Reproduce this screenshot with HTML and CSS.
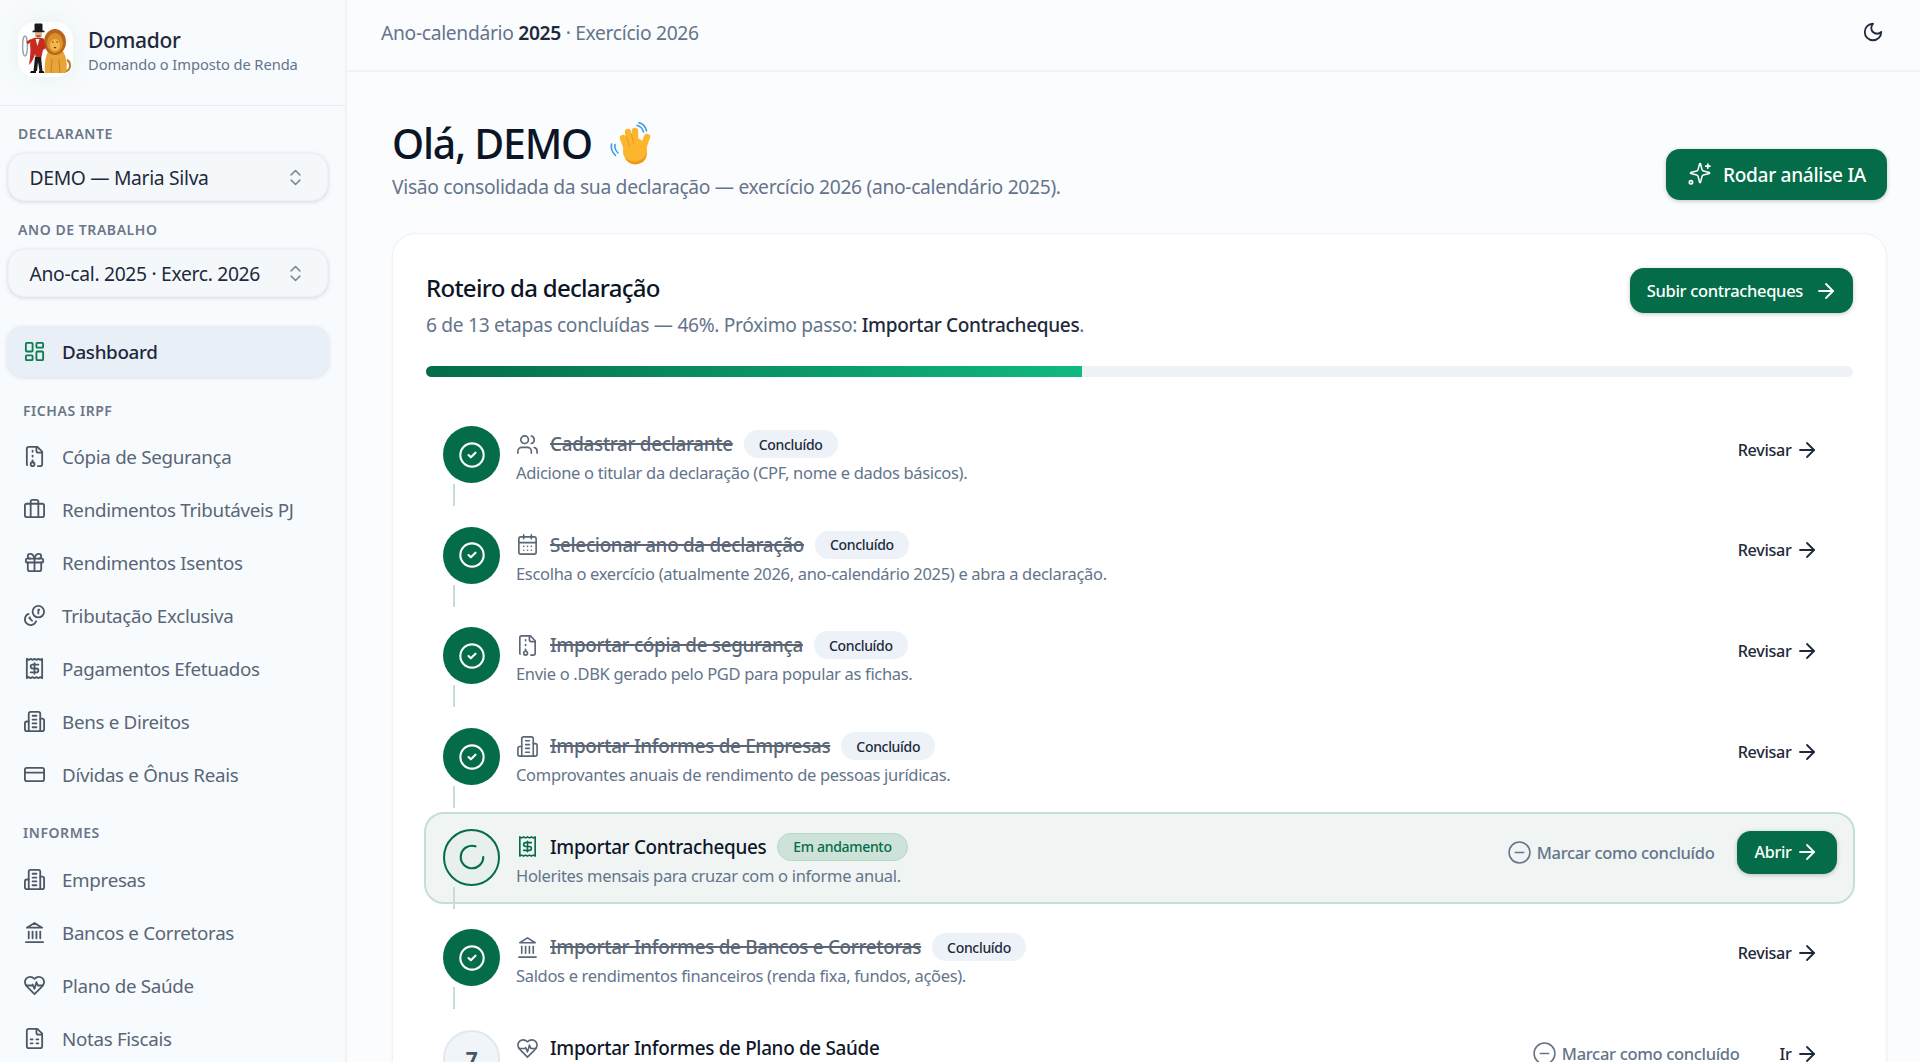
FILE: index.html
```html
<!DOCTYPE html>
<html lang="pt-BR">
<head>
<meta charset="utf-8">
<title>Domador</title>
<link rel="stylesheet" href="styles.css">
</head>
<body>
<svg class="sprite" aria-hidden="true">
  <defs>
    <symbol id="i-arrow" viewBox="0 0 24 24"><path d="M5 12h14"/><path d="m12 5 7 7-7 7"/></symbol>
    <symbol id="i-moon" viewBox="0 0 24 24"><path d="M12 3a6 6 0 0 0 9 9 9 9 0 1 1-9-9Z"/></symbol>
    <symbol id="i-updown" viewBox="0 0 24 24"><path d="m7 15 5 5 5-5"/><path d="m7 9 5-5 5 5"/></symbol>
    <symbol id="i-dash" viewBox="0 0 24 24"><rect x="3" y="3" width="7" height="9" rx="1"/><rect x="14" y="3" width="7" height="5" rx="1"/><rect x="14" y="12" width="7" height="9" rx="1"/><rect x="3" y="16" width="7" height="5" rx="1"/></symbol>
    <symbol id="i-archive" viewBox="0 0 24 24"><path d="M10 12v-1"/><path d="M10 18v-2"/><path d="M10 7V6"/><path d="M14 2v4a2 2 0 0 0 2 2h4"/><path d="M15.5 22H18a2 2 0 0 0 2-2V7l-5-5H6a2 2 0 0 0-2 2v16a2 2 0 0 0 .274 1.01"/><circle cx="10" cy="20" r="2"/></symbol>
    <symbol id="i-brief" viewBox="0 0 24 24"><path d="M16 20V4a2 2 0 0 0-2-2h-4a2 2 0 0 0-2 2v16"/><rect x="2" y="6" width="20" height="14" rx="2"/></symbol>
    <symbol id="i-gift" viewBox="0 0 24 24"><rect x="3" y="8" width="18" height="4" rx="1"/><path d="M12 8v13"/><path d="M19 12v7a2 2 0 0 1-2 2H7a2 2 0 0 1-2-2v-7"/><path d="M7.5 8a2.5 2.5 0 0 1 0-5A4.8 8 0 0 1 12 8a4.8 8 0 0 1 4.5-5 2.5 2.5 0 0 1 0 5"/></symbol>
    <symbol id="i-coins" viewBox="0 0 24 24"><g transform="matrix(-1 0 0 1 24 0)"><circle cx="8" cy="8" r="6"/><path d="M18.09 10.37A6 6 0 1 1 10.34 18"/><path d="M7 6h1v4"/><path d="m16.71 13.88.7.71-2.82 2.82"/></g></symbol>
    <symbol id="i-receipt" viewBox="0 0 24 24"><path d="M4 2v20l2-1 2 1 2-1 2 1 2-1 2 1 2-1 2 1V2l-2 1-2-1-2 1-2-1-2 1-2-1-2 1Z"/><path d="M16 8h-6a2 2 0 1 0 0 4h4a2 2 0 1 1 0 4H8"/><path d="M12 17.5v-11"/></symbol>
    <symbol id="i-building" viewBox="0 0 24 24"><path d="M6 22V4a2 2 0 0 1 2-2h8a2 2 0 0 1 2 2v18Z"/><path d="M6 12H4a2 2 0 0 0-2 2v6a2 2 0 0 0 2 2h2"/><path d="M18 9h2a2 2 0 0 1 2 2v9a2 2 0 0 1-2 2h-2"/><path d="M10 6h4"/><path d="M10 10h4"/><path d="M10 14h4"/><path d="M10 18h4"/></symbol>
    <symbol id="i-card" viewBox="0 0 24 24"><rect x="2" y="5" width="20" height="14" rx="2"/><path d="M2 10h20"/></symbol>
    <symbol id="i-bank" viewBox="0 0 24 24"><path d="M3 22h18"/><path d="M6 18v-7"/><path d="M10 18v-7"/><path d="M14 18v-7"/><path d="M18 18v-7"/><path d="M12 2l8 5H4Z"/></symbol>
    <symbol id="i-heart" viewBox="0 0 24 24"><path d="M19 14c1.49-1.46 3-3.21 3-5.5A5.5 5.5 0 0 0 16.5 3c-1.76 0-3 .5-4.5 2-1.5-1.5-2.74-2-4.5-2A5.5 5.5 0 0 0 2 8.5c0 2.3 1.5 4.05 3 5.5l7 7Z"/><path d="M3.22 12H9.5l.5-1 2 4.5 2-7 1.5 3.5h5.27"/></symbol>
    <symbol id="i-sheet" viewBox="0 0 24 24"><path d="M15 2H6a2 2 0 0 0-2 2v16a2 2 0 0 0 2 2h12a2 2 0 0 0 2-2V7Z"/><path d="M14 2v4a2 2 0 0 0 2 2h4"/><path d="M8 13h2"/><path d="M14 13h2"/><path d="M8 17h2"/><path d="M14 17h2"/></symbol>
    <symbol id="i-users" viewBox="0 0 24 24"><path d="M16 21v-2a4 4 0 0 0-4-4H6a4 4 0 0 0-4 4v2"/><circle cx="9" cy="7" r="4"/><path d="M22 21v-2a4 4 0 0 0-3-3.87"/><path d="M16 3.13a4 4 0 0 1 0 7.75"/></symbol>
    <symbol id="i-cal" viewBox="0 0 24 24"><path d="M8 2v4"/><path d="M16 2v4"/><rect x="3" y="4" width="18" height="18" rx="2"/><path d="M3 10h18"/><path d="M8 14h.01"/><path d="M12 14h.01"/><path d="M16 14h.01"/><path d="M8 18h.01"/><path d="M12 18h.01"/><path d="M16 18h.01"/></symbol>
    <symbol id="i-spark" viewBox="0 0 24 24"><path d="M9.937 15.5A2 2 0 0 0 8.5 14.063l-6.135-1.582a.5.5 0 0 1 0-.962L8.5 9.936A2 2 0 0 0 9.937 8.5l1.582-6.135a.5.5 0 0 1 .963 0L14.063 8.5A2 2 0 0 0 15.5 9.937l6.135 1.581a.5.5 0 0 1 0 .964L15.5 14.063a2 2 0 0 0-1.437 1.437l-1.582 6.135a.5.5 0 0 1-.963 0z" transform="translate(1.5 -0.5) scale(.92)"/><path d="M20 2v4"/><path d="M22 4h-4"/><circle cx="3.8" cy="19.5" r="1.6"/></symbol>
    <symbol id="i-minus" viewBox="0 0 24 24"><circle cx="12" cy="12" r="10"/><path d="M8 12h8"/></symbol>
    <symbol id="i-check" viewBox="0 0 24 24"><circle cx="12" cy="12" r="10"/><path d="m9 12 2 2 4-4"/></symbol>
    <symbol id="i-loader" viewBox="0 0 24 24"><path d="M21 12a9 9 0 1 1-6.219-8.56"/></symbol>
  </defs>
</svg>

<div class="shell">
  <aside class="sidebar">
    <div class="brand">
      <div class="logo">
        <svg viewBox="0 0 55 55" width="55" height="55">
          <path d="M44 49c5 1 8-1 8-5 0-3-1-5-3-6" fill="none" stroke="#b97a22" stroke-width="2"/>
          <path d="M27 51c-1-10 1-19 4-23h13c4 5 6 15 4 23Z" fill="#e8a436"/>
          <path d="M33 51l1-14M42 51l-1-14" stroke="#c77f1f" stroke-width="1"/>
          <ellipse cx="37" cy="20" rx="11" ry="13" fill="#b5651d"/>
          <ellipse cx="37" cy="21" rx="8" ry="10" fill="#dd9029"/>
          <ellipse cx="37" cy="23" rx="5" ry="6" fill="#f2b84f"/>
          <path d="M34 20h1.500M38.500 20h1.500" stroke="#4a2b10" stroke-width="1.200"/>
          <path d="M35.500 25h3l-1.500 1.800Z" fill="#5a3010"/>
          <ellipse cx="7" cy="24" rx="2.400" ry="10" fill="none" stroke="#9aa3ad" stroke-width="1.400"/>
          <path d="M9 21l5-3" stroke="#c92a20" stroke-width="3"/>
          <path d="M14 17c3-2 9-2 12 0l2 9-3 2-2 9h-5l-1-5c-1 4-3 8-6 11 1-7 2-14 1-21Z" fill="#c92a20"/>
          <path d="M17.500 17h4l-2 7Z" fill="#f2efe8"/>
          <path d="M17 35h6l1.500 14h-3l-1.500-9-1 9h-3.500Z" fill="#1d1a1c"/>
          <path d="M13 49h5v2h-6ZM21 49h4.500l1 2H21Z" fill="#111"/>
          <circle cx="20.500" cy="12.500" r="3.600" fill="#e7b086"/>
          <rect x="16.500" y="1.500" width="8" height="8" rx="1" fill="#1b1b1f"/>
          <rect x="14.500" y="8.500" width="12" height="1.800" rx=".9" fill="#1b1b1f"/>
          <path d="M18.500 14h4" stroke="#3a2418" stroke-width="1"/>
        </svg>
      </div>
      <div class="brand-text">
        <div class="brand-name">Domador</div>
        <div class="brand-sub">Domando o Imposto de Renda</div>
      </div>
    </div>

    <div class="field-label first">DECLARANTE</div>
    <div class="select">
      <span>DEMO — Maria Silva</span>
      <svg class="ico updown"><use href="#i-updown"/></svg>
    </div>
    <div class="field-label second">ANO DE TRABALHO</div>
    <div class="select">
      <span>Ano-cal. 2025 · Exerc. 2026</span>
      <svg class="ico updown"><use href="#i-updown"/></svg>
    </div>

    <nav class="nav">
      <a class="nav-item active"><svg class="ico nav-ico"><use href="#i-dash"/></svg><span>Dashboard</span></a>
      <div class="nav-group g-one">FICHAS IRPF</div>
      <a class="nav-item"><svg class="ico nav-ico"><use href="#i-archive"/></svg><span>Cópia de Segurança</span></a>
      <a class="nav-item"><svg class="ico nav-ico"><use href="#i-brief"/></svg><span>Rendimentos Tributáveis PJ</span></a>
      <a class="nav-item"><svg class="ico nav-ico"><use href="#i-gift"/></svg><span>Rendimentos Isentos</span></a>
      <a class="nav-item"><svg class="ico nav-ico"><use href="#i-coins"/></svg><span>Tributação Exclusiva</span></a>
      <a class="nav-item"><svg class="ico nav-ico"><use href="#i-receipt"/></svg><span>Pagamentos Efetuados</span></a>
      <a class="nav-item"><svg class="ico nav-ico"><use href="#i-building"/></svg><span>Bens e Direitos</span></a>
      <a class="nav-item"><svg class="ico nav-ico"><use href="#i-card"/></svg><span>Dívidas e Ônus Reais</span></a>
      <div class="nav-group g-two">INFORMES</div>
      <a class="nav-item"><svg class="ico nav-ico"><use href="#i-building"/></svg><span>Empresas</span></a>
      <a class="nav-item"><svg class="ico nav-ico"><use href="#i-bank"/></svg><span>Bancos e Corretoras</span></a>
      <a class="nav-item"><svg class="ico nav-ico"><use href="#i-heart"/></svg><span>Plano de Saúde</span></a>
      <a class="nav-item"><svg class="ico nav-ico"><use href="#i-sheet"/></svg><span>Notas Fiscais</span></a>
    </nav>
  </aside>

  <main class="main">
    <header class="topbar">
      <div class="crumb">Ano-calendário <strong>2025</strong> · Exercício 2026</div>
      <svg class="ico moon"><use href="#i-moon"/></svg>
    </header>

    <div class="content">
      <div class="page-head">
        <div>
          <h1 class="hello">Olá, DEMO
            <svg class="wave" viewBox="0 0 44 44" width="44" height="44">
              <g fill="none" stroke="#3f9fe0" stroke-width="1.600" stroke-linecap="round">
                <path d="M29 3.500c3 .5 5.500 3 6.500 6.500"/><path d="M31 .8c3.500 .8 6.500 4 7.500 8"/>
                <path d="M7 22.500c-.5 3 .5 6 3 8.500"/><path d="M3.500 22c-.8 4 .5 8 4 11.500"/>
              </g>
              <g fill="none" stroke="#fbb62e" stroke-width="6.400" stroke-linecap="round">
                <path d="M27 26V9"/><path d="M23 26 20 10"/><path d="M19 27 15 16"/><path d="M34 29l5-14"/>
              </g>
              <ellipse cx="27" cy="29" rx="12" ry="13" fill="#fbb62e"/>
              <g fill="none" stroke="#e8961c" stroke-width=".9" stroke-linecap="round">
                <path d="M23.500 12l2 10"/><path d="M18 14.500l3.500 9"/>
              </g>
              <path d="M17 36c3 6 10 8 16 5 4-2 6-6 6-11-2 6-6 9-11 9.500-4 .4-8-1-11-3.500Z" fill="#f0961a"/>
            </svg>
          </h1>
          <p class="lead">Visão consolidada da sua declaração — exercício 2026 (ano-calendário 2025).</p>
        </div>
        <button class="btn btn-ia"><svg class="ico spark"><use href="#i-spark"/></svg>Rodar análise IA</button>
      </div>

      <section class="card">
        <div class="card-head">
          <div>
            <h2 class="card-title">Roteiro da declaração</h2>
            <p class="card-sub">6 de 13 etapas concluídas — 46%. Próximo passo: <strong>Importar Contracheques</strong>.</p>
          </div>
          <button class="btn btn-up">Subir contracheques<svg class="ico arrow"><use href="#i-arrow"/></svg></button>
        </div>
        <div class="progress"><div class="progress-fill" style="width:46%"></div></div>

        <ol class="steps">
          <li class="step done">
            <div class="dot"><svg class="ico dot-ico"><use href="#i-check"/></svg></div>
            <div class="step-body">
              <div class="step-title"><svg class="ico step-ico"><use href="#i-users"/></svg><span class="t">Cadastrar declarante</span><span class="badge">Concluído</span></div>
              <div class="step-desc">Adicione o titular da declaração (CPF, nome e dados básicos).</div>
            </div>
            <div class="actions"><a class="act">Revisar<svg class="ico arrow"><use href="#i-arrow"/></svg></a></div>
          </li>
          <li class="step done">
            <div class="dot"><svg class="ico dot-ico"><use href="#i-check"/></svg></div>
            <div class="step-body">
              <div class="step-title"><svg class="ico step-ico"><use href="#i-cal"/></svg><span class="t">Selecionar ano da declaração</span><span class="badge">Concluído</span></div>
              <div class="step-desc">Escolha o exercício (atualmente 2026, ano-calendário 2025) e abra a declaração.</div>
            </div>
            <div class="actions"><a class="act">Revisar<svg class="ico arrow"><use href="#i-arrow"/></svg></a></div>
          </li>
          <li class="step done">
            <div class="dot"><svg class="ico dot-ico"><use href="#i-check"/></svg></div>
            <div class="step-body">
              <div class="step-title"><svg class="ico step-ico"><use href="#i-archive"/></svg><span class="t">Importar cópia de segurança</span><span class="badge">Concluído</span></div>
              <div class="step-desc">Envie o .DBK gerado pelo PGD para popular as fichas.</div>
            </div>
            <div class="actions"><a class="act">Revisar<svg class="ico arrow"><use href="#i-arrow"/></svg></a></div>
          </li>
          <li class="step done">
            <div class="dot"><svg class="ico dot-ico"><use href="#i-check"/></svg></div>
            <div class="step-body">
              <div class="step-title"><svg class="ico step-ico"><use href="#i-building"/></svg><span class="t">Importar Informes de Empresas</span><span class="badge">Concluído</span></div>
              <div class="step-desc">Comprovantes anuais de rendimento de pessoas jurídicas.</div>
            </div>
            <div class="actions"><a class="act">Revisar<svg class="ico arrow"><use href="#i-arrow"/></svg></a></div>
          </li>
          <li class="step current">
            <div class="dot"><svg class="ico loader"><use href="#i-loader"/></svg></div>
            <div class="step-body">
              <div class="step-title"><svg class="ico step-ico green"><use href="#i-receipt"/></svg><span class="t">Importar Contracheques</span><span class="badge badge-green">Em andamento</span></div>
              <div class="step-desc">Holerites mensais para cruzar com o informe anual.</div>
            </div>
            <div class="actions"><a class="mark"><svg class="ico mark-ico"><use href="#i-minus"/></svg>Marcar como concluído</a><a class="act act-solid">Abrir<svg class="ico arrow"><use href="#i-arrow"/></svg></a></div>
          </li>
          <li class="step done">
            <div class="dot"><svg class="ico dot-ico"><use href="#i-check"/></svg></div>
            <div class="step-body">
              <div class="step-title"><svg class="ico step-ico"><use href="#i-bank"/></svg><span class="t">Importar Informes de Bancos e Corretoras</span><span class="badge">Concluído</span></div>
              <div class="step-desc">Saldos e rendimentos financeiros (renda fixa, fundos, ações).</div>
            </div>
            <div class="actions"><a class="act">Revisar<svg class="ico arrow"><use href="#i-arrow"/></svg></a></div>
          </li>
          <li class="step todo">
            <div class="dot">7</div>
            <div class="step-body">
              <div class="step-title"><svg class="ico step-ico"><use href="#i-heart"/></svg><span class="t">Importar Informes de Plano de Saúde</span></div>
            </div>
            <div class="actions"><a class="mark"><svg class="ico mark-ico"><use href="#i-minus"/></svg>Marcar como concluído</a><a class="act">Ir<svg class="ico arrow"><use href="#i-arrow"/></svg></a></div>
          </li>
        </ol>
      </section>
    </div>
  </main>
</div>
</body>
</html>
```

FILE: styles.css
```css
* { box-sizing: border-box; }
html, body { margin: 0; height: 100%; overflow: hidden; }
body {
  font-family: "Noto Sans", "Liberation Sans", sans-serif;
  color: #0f172a;
  background: #fbfcfe;
  letter-spacing: -0.02em;
}
.sprite { display: none; }
.ico { fill: none; stroke: currentColor; stroke-width: 2; stroke-linecap: round; stroke-linejoin: round; flex: none; }

.shell { display: flex; height: 1062px; overflow: hidden; }

/* sidebar */
.sidebar {
  width: 347px; flex: none; height: 100%; padding: 0 17px 0 6px;
  background: #f8fbfe; border-right: 2px solid #eef1f5; overflow: hidden;
}
.brand {
  display: flex; align-items: flex-start; gap: 15px; height: 106px; margin: 0 -17px 0 -6px;
  padding: 22px 0 0 18px; border-bottom: 1px solid #e9edf2;
}
.logo {
  width: 55px; height: 55px; border-radius: 17px; background: #fff;
  box-shadow: 0 0 28px rgba(16, 120, 90, .08); overflow: hidden; flex: none;
}
.logo svg { display: block; }
.brand-text { padding-top: 5px; }
.brand-name { font-size: 21px; line-height: 27px; font-weight: 500; color: #1e293b; }
.brand-sub { font-size: 14.700px; line-height: 20px; color: #64748b; letter-spacing: -0.005em; }

.field-label {
  font-size: 14px; line-height: 18px; font-weight: 600; color: #6b7686; letter-spacing: .04em;
  padding-left: 12px;
}
.field-label.first { margin-top: 19px; margin-bottom: 10px; }
.field-label.second { margin-top: 20px; margin-bottom: 10px; }
.select {
  display: flex; align-items: center; justify-content: space-between; height: 48px; margin-left: 2px;
  padding: 0 21px 0 20.500px; border-radius: 16px; background: #f5f8fb; border: 1px solid #edf0f4;
  box-shadow: 0 1px 4px rgba(15, 23, 42, .16); font-size: 19.300px; color: #1e293b;
}
.updown { width: 21px; height: 21px; color: #7f8a98; stroke-width: 1.800; }

.nav { margin-top: 29px; }
.nav-item {
  display: flex; align-items: center; gap: 16px; height: 53px; padding-left: 17px; font-size: 18.800px; color: #5a6675;
}
.nav-item.active {
  height: 51px; border-radius: 16px; background: #e9eff6; color: #1e293b; font-weight: 500;
  box-shadow: 0 1px 4px rgba(15, 23, 42, .12);
  margin: 0 -1px 0 1px; padding-left: 16px;
}
.nav-item.active .nav-ico { color: #0f7a4f; }
.nav-ico { width: 23px; height: 23px; stroke-width: 1.900; color: #4d5866; }
.nav-group { font-size: 14px; line-height: 18px; font-weight: 600; color: #6b7686; letter-spacing: .04em; padding-left: 17px; }
.g-one { margin-top: 25px; margin-bottom: 10px; }
.g-two { margin-top: 23px; margin-bottom: 11px; }

/* main */
.main { flex: 1; min-width: 0; display: flex; flex-direction: column; }
.topbar {
  height: 72px; flex: none; display: flex; align-items: center; justify-content: space-between;
  padding: 0 36px 6px 34px; border-bottom: 2px solid #f0f2f5;
}
.crumb { font-size: 19.250px; color: #64748b; }
.crumb strong { color: #1e293b; font-weight: 600; }
.moon { width: 22px; height: 22px; color: #1e293b; }

.content { padding: 0 33px 0 45px; }
.page-head { display: flex; justify-content: space-between; align-items: flex-end; padding-top: 47px; }
.hello {
  margin: 0; display: flex; align-items: center; gap: 16px;
  font-size: 41px; line-height: 48px; font-weight: 500; color: #0b1526; letter-spacing: -0.03em;
}
.wave { display: block; margin-top: 1px; }
.lead { margin: 7px 0 0; font-size: 19.250px; line-height: 26px; color: #64748b; }

.btn {
  display: inline-flex; align-items: center; border: 0; border-radius: 14px; background: #046c48; color: #fff;
  font-family: inherit; letter-spacing: inherit; box-shadow: 0 1px 4px rgba(15, 23, 42, .25);
}
.btn-ia { width: 221px; height: 51px; padding-left: 21px; gap: 11px; font-size: 19.100px; font-weight: 500; }
.spark { width: 25px; height: 25px; stroke-width: 1.600; }
.btn-up { height: 45px; padding: 0 15px 0 17px; gap: 11px; font-size: 16.500px; font-weight: 500; }
.arrow { width: 24px; height: 24px; stroke-width: 1.800; }

.card {
  margin-top: 33px; padding: 34px 33px; border-radius: 24px; background: #fff;
  border: 1px solid #f0f2f5; box-shadow: 0 1px 3px rgba(15, 23, 42, .05);
}
.card-head { display: flex; justify-content: space-between; align-items: flex-start; }
.card-title { margin: 2px 0 0; font-size: 24px; line-height: 36px; font-weight: 500; color: #0b1526; letter-spacing: -0.03em; }
.card-sub { margin: 5px 0 0; font-size: 19.200px; line-height: 28px; color: #64748b; }
.card-sub strong { color: #1e293b; font-weight: 500; font-size: 19px; }

.progress { margin-top: 27px; height: 11px; border-radius: 6px; background: #eef2f6; overflow: hidden; }
.progress-fill { height: 100%; background: linear-gradient(90deg, #046c48, #10b981); }

.steps { list-style: none; margin: 32px -2px 0; padding: 0; display: flex; flex-direction: column; gap: 8.700px; }
.step {
  position: relative; display: flex; align-items: flex-start; height: 92px; padding: 15px 16px 0 17px;
  border: 2px solid transparent; border-radius: 20px;
}
.step::after {
  content: ""; position: absolute; left: 27px; top: 73px; width: 2px; height: 22px; background: #c4ded5;
}
.step.todo::after { display: none; }
.dot {
  width: 57px; height: 57px; border-radius: 50%; flex: none; display: flex; align-items: center; justify-content: center;
  background: #046c48; color: #fff; position: relative; z-index: 1;
}
.dot-ico { width: 28px; height: 28px; stroke-width: 1.800; }
.step-body { flex: 1; min-width: 0; padding: 5px 0 0 16px; }
.step-title { display: flex; align-items: center; height: 26px; font-size: 18.900px; font-weight: 500; color: #0f172a; }
.step-ico { width: 23px; height: 23px; stroke-width: 1.700; margin-right: 11px; color: #5a6675; }
.step-ico.green { color: #046c48; }
.step.done .t { color: #5a6675; text-decoration: line-through; text-decoration-thickness: 1.500px; }
.step-desc { margin-top: 4px; font-size: 16.500px; line-height: 24px; color: #64748b; }
.badge {
  margin-left: 11px; height: 28px; padding: 0 15px; border-radius: 14px; background: #edf2f8; color: #1e293b;
  display: inline-flex; align-items: center; font-size: 14px; font-weight: 500;
}
.badge-green { background: #cde2d9; color: #046c48; border: 1px solid #b6d6c9; }
.actions { display: flex; align-items: center; gap: 0; margin-top: 2px; }
.act {
  display: inline-flex; align-items: center; gap: 3px; height: 43px; padding: 0 18.500px 0 17px; border-radius: 14px;
  font-size: 16.200px; font-weight: 500; color: #1e293b;
}
.act-solid { background: #046c48; color: #fff; box-shadow: 0 1px 4px rgba(15, 23, 42, .25); }
.mark { display: inline-flex; align-items: center; gap: 5px; font-size: 16.500px; font-weight: 500; color: #64748b; margin-right: 23px; }
.mark-ico { width: 25px; height: 25px; stroke-width: 1.500; }
.step.todo .mark { margin-right: 23px; }

.step.current { background: #f0f5f3; border-color: #c3e0d5; }
.step.current .dot { background: #e7f0ed; border: 2px solid #046c48; color: #046c48; }
.loader { width: 30px; height: 30px; stroke-width: 1.700; }
.step.todo .dot { background: #f1f5f9; border: 2px solid #e2e8f0; color: #475569; font-size: 21px; font-weight: 700; }
```
